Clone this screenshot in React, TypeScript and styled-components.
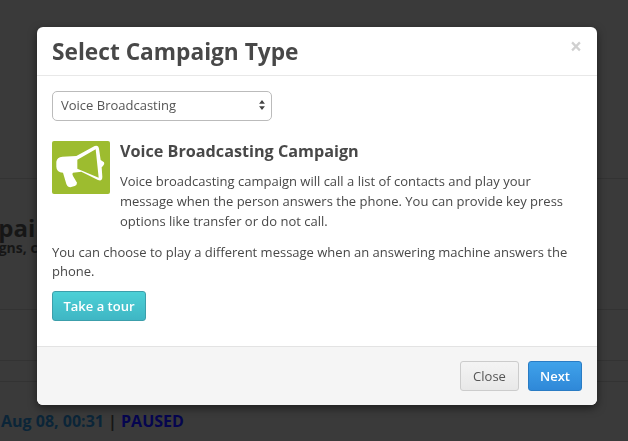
import { createGlobalStyle, styled } from 'styled-components';

const Global = createGlobalStyle`
  html, body { margin: 0; padding: 0; height: 100%; }
  body { font-family: "Open Sans", "Liberation Sans", sans-serif; background: #3a3a3a; overflow: hidden; }
`;

const Page = styled.div`
  width: 628px;
  height: 441px;
  overflow: hidden;
  background: #3a3a3a;
`;

const Section = styled.div<{ $h: number }>`
  height: ${(p) => p.$h}px;
  box-sizing: border-box;
  border-bottom: 1px solid #333;
  overflow: hidden;
  white-space: nowrap;
`;

const BgHeading = styled.div`
  margin: 37px 0 0 -55px;
  font-size: 24px;
  line-height: 24px;
  font-weight: 700;
  color: #161616;
`;

const BgSub = styled.div`
  margin: 1px 0 0 -54px;
  font-size: 14px;
  line-height: 14px;
  font-weight: 700;
  color: #161616;
`;

const Status = styled.div`
  padding: 29px 0 0 1px;
  font-size: 16px;
  line-height: 20px;
  font-weight: 700;
  color: #161616;
  white-space: nowrap;
`;

const DateText = styled.span`
  color: #0b2538;
`;

const Paused = styled.span`
  color: #05054f;
`;

const Overlay = styled.div`
  position: fixed;
  top: 27px;
  left: 37px;
  width: 560px;
  height: 378px;
  display: flex;
  flex-direction: column;
  background: #fff;
  border-radius: 6px;
  box-shadow: 0 3px 9px rgba(0, 0, 0, 0.5);
  overflow: hidden;
  color: #444;
`;

const Header = styled.div`
  height: 49px;
  flex: none;
  box-sizing: border-box;
  display: flex;
  align-items: flex-start;
  justify-content: space-between;
  padding: 1px 15px 0;
  border-bottom: 1px solid #e8e8e8;
`;

const Title = styled.h3`
  margin: 0;
  font-size: 22.7px;
  line-height: 48px;
  font-weight: 700;
  color: #484848;
`;

const CloseX = styled.span`
  margin-top: 8px;
  font-size: 21px;
  font-weight: 700;
  color: #d0d0d0;
  line-height: 1;
`;

const Body = styled.div`
  flex: 1;
  padding: 15px;
`;

const SelectBox = styled.div`
  width: 220px;
  height: 30px;
  box-sizing: border-box;
  display: flex;
  align-items: center;
  justify-content: space-between;
  padding: 0 6px 2px 8px;
  border: 1px solid #bbb;
  border-radius: 5px;
  background: #fff;
  font-size: 13px;
  color: #555;
`;

const Campaign = styled.div`
  display: flex;
  gap: 10px;
  margin-top: 20px;
`;

const IconTile = styled.div`
  width: 58px;
  height: 53px;
  flex: none;
  border-radius: 2px;
  background: #9dbc2f;
  overflow: hidden;
`;

const CampaignTitle = styled.h4`
  margin: 0;
  font-size: 16.2px;
  line-height: 20px;
  font-weight: 700;
  color: #484848;
`;

const Para = styled.p`
  margin: 10px 0 0;
  font-size: 13px;
  line-height: 20px;
  color: #484848;
`;

const Wide = styled(Para)`
  margin-top: 12px;
  line-height: 19px;
`;

const Button = styled.button<{ $kind: 'tour' | 'close' | 'next' }>`
  height: 30px;
  box-sizing: border-box;
  border-radius: 3px;
  font-family: inherit;
  font-size: 13px;
  font-weight: ${(p) => (p.$kind === 'close' ? 400 : 600)};
  padding: 0;
  color: ${(p) => (p.$kind === 'close' ? '#555' : '#fff')};
  border: 1px solid
    ${(p) => (p.$kind === 'tour' ? '#3c9fab' : p.$kind === 'next' ? '#2a7cc4' : '#ccc')};
  background: ${(p) =>
    p.$kind === 'tour'
      ? 'linear-gradient(#4cd0d6, #3fb6c4)'
      : p.$kind === 'next'
        ? 'linear-gradient(#3fa2ea, #2f88d8)'
        : 'linear-gradient(#f4f4f4, #e8e8e8)'};
  width: ${(p) => (p.$kind === 'tour' ? 94 : p.$kind === 'close' ? 59 : 54)}px;
`;

const TourButton = styled(Button)`
  display: block;
  margin-top: 10px;
`;

const Footer = styled.div`
  height: 59px;
  flex: none;
  box-sizing: border-box;
  display: flex;
  align-items: center;
  justify-content: flex-end;
  gap: 9px;
  padding: 0 15px;
  background: #f5f5f5;
  border-top: 1px solid #e3e3e3;
`;

function Megaphone() {
  return (
    <svg width="58" height="53" viewBox="37 33 174 159" style={{ display: 'block' }}>
      <path
        fill="#fff"
        fillRule="evenodd"
        d="M50 95Q52 82 68 80L110 78 165 48Q176 44 178 56L183 90 193 97Q196 102 190 108L186 112 188 140Q188 155 175 150L125 125 100 128Q96 130 100 138L112 158Q112 166 105 168L92 172Q84 172 80 162L70 128Q50 126 50 110ZM113 89V116L177 143 168 58Z"
      />
    </svg>
  );
}

function SelectArrows() {
  return (
    <svg width="6" height="10" viewBox="0 0 7 12">
      <path fill="#444" d="M3.500 0 7 4.500H0zM0 7.500h7L3.500 12z" />
    </svg>
  );
}

export default function App() {
  return (
    <Page>
      <Global />
      <Section $h={179} />
      <Section $h={131}>
        <BgHeading>Campai</BgHeading>
        <BgSub>Campaigns, c</BgSub>
      </Section>
      <Section $h={51} />
      <Section $h={21} />
      <Status>
        <DateText>Aug 08, 00:31</DateText> | <Paused>PAUSED</Paused>
      </Status>
      <Overlay>
        <Header>
          <Title>Select Campaign Type</Title>
          <CloseX>×</CloseX>
        </Header>
        <Body>
          <SelectBox>
            Voice Broadcasting
            <SelectArrows />
          </SelectBox>
          <Campaign>
            <IconTile>
              <Megaphone />
            </IconTile>
            <div>
              <CampaignTitle>Voice Broadcasting Campaign</CampaignTitle>
              <Para>
                Voice broadcasting campaign will call a list of contacts and play your message when
                the person answers the phone. You can provide key press options like transfer or do
                not call.
              </Para>
            </div>
          </Campaign>
          <Wide>
            You can choose to play a different message when an answering machine answers the phone.
          </Wide>
          <TourButton $kind="tour">Take a tour</TourButton>
        </Body>
        <Footer>
          <Button $kind="close">Close</Button>
          <Button $kind="next">Next</Button>
        </Footer>
      </Overlay>
    </Page>
  );
}
